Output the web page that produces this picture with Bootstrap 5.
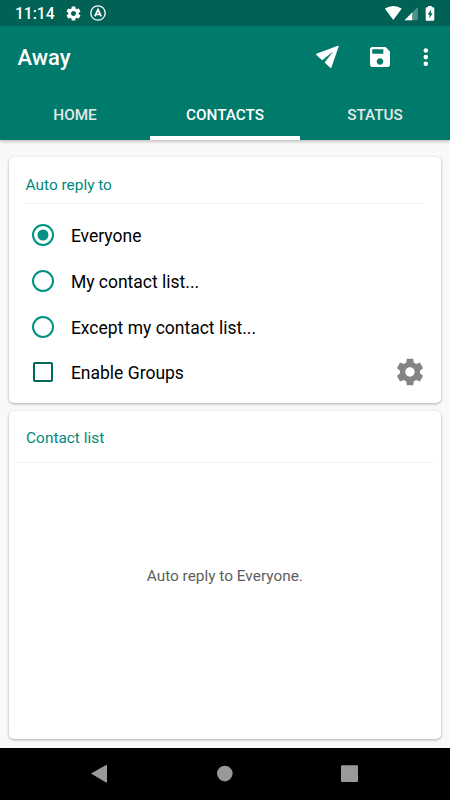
<!DOCTYPE html>
<html lang="en">
<head>
<meta charset="utf-8">
<meta name="viewport" content="width=device-width, initial-scale=1">
<title>Away</title>
<link rel="stylesheet" href="https://cdn.jsdelivr.net/npm/bootstrap@5.3.0/dist/css/bootstrap.min.css">
<style>
body{font-family:Roboto,"Liberation Sans",sans-serif;background:#f9f9f9;height:800px;overflow:hidden;color:#000}
svg{display:block;flex:none}
.statusbar{height:26px;background:#006154;padding-left:15px}
.clock{font-size:15.6px;font-weight:500;line-height:20px;padding-top:2px;width:50.3px}
.appbar{height:62px;background:#007a6a;padding-left:17.5px}
.apptitle{font-size:22px;font-weight:500;line-height:26px;padding-top:2px}
.tabs{height:52px;background:#007a6a}
header{box-shadow:0 1px 4px rgba(0,0,0,.3);flex:none}
.tabs .nav-link{color:#e4e9e8;font-size:15.3px;font-weight:500;line-height:20px;padding:17px 0 11px;border-radius:0;border-bottom:4px solid transparent;height:52px}
.tabs .nav-link.active{color:#fff;border-bottom-color:#fff}
.page{padding:17.4px 9px 9px 8.6px;gap:8.5px}
.panel{border:0;border-radius:5px;box-shadow:0 1px 3px rgba(0,0,0,.32)}
.panel-one{height:245.5px;padding:0 17px}
.panel-title{color:#00897b;font-size:15.4px;font-weight:400;line-height:20px;margin:0}
.panel-one .panel-title{padding:17.5px 0 8px}
.panel-two .panel-title{padding:16.5px 9px 14px}
.panel-two{padding:0 8.5px}
.rule{height:1px;background:#f0f0f0}
.opts{padding-top:8.7px}
.opt{height:45.6px;font-size:17.5px;line-height:24px;padding-left:5px}
.opt>svg:first-child{margin-right:16.3px}
.opt span{padding-top:2px}
.gear-btn{margin-right:-2.2px}
.hint{color:#606060;font-size:15.4px;padding-bottom:48.5px}
.navbar-os{height:52px;background:#000;flex:none}
</style>
<script src="https://cdn.jsdelivr.net/npm/bootstrap@5.3.0/dist/js/bootstrap.bundle.min.js"></script>
</head>
<body class="d-flex flex-column">
<svg width="0" height="0" class="position-absolute"><symbol id="gear" viewBox="0 0 24 24"><path d="M19.43 12.98c.04-.32.07-.64.07-.98s-.03-.66-.07-.98l2.11-1.65c.19-.15.24-.42.12-.64l-2-3.46c-.12-.22-.39-.3-.61-.22l-2.49 1c-.52-.4-1.08-.73-1.69-.98l-.38-2.65C14.46 2.18 14.25 2 14 2h-4c-.25 0-.46.18-.49.42l-.38 2.65c-.61.25-1.17.59-1.69.98l-2.49-1c-.23-.09-.49 0-.61.22l-2 3.46c-.13.22-.07.49.12.64l2.11 1.65c-.04.32-.07.65-.07.98s.03.66.07.98l-2.11 1.65c-.19.15-.24.42-.12.64l2 3.46c.12.22.39.3.61.22l2.49-1c.52.4 1.08.73 1.69.98l.38 2.65c.03.24.24.42.49.42h4c.25 0 .46-.18.49-.42l.38-2.65c.61-.25 1.17-.59 1.69-.98l2.49 1c.23.09.49 0 .61-.22l2-3.46c.12-.22.07-.49-.12-.64l-2.11-1.65zM12 15.5c-1.93 0-3.5-1.57-3.5-3.5s1.57-3.5 3.5-3.5 3.5 1.57 3.5 3.5-1.57 3.5-3.5 3.5z"/></symbol></svg>
<header>
  <div class="statusbar d-flex align-items-center text-white">
    <span class="clock">11:14</span>
    <svg width="17" height="17" fill="#fff"><use href="#gear"/></svg>
    <svg class="ms-2" width="16" height="16" viewBox="0 0 16 16" fill="none" stroke="#fff"><circle cx="8" cy="8" r="7.2" stroke-width="1.3"/><path d="M4.8 11.4 8 4.6l3.2 6.800M6 9.500h4" stroke-width="1.7"/></svg>
    <svg class="ms-auto" width="66" height="26" viewBox="384 0 66 26" fill="#fff"><path d="M384.8 8.600Q393.300 3.200 401.800 8.600L393.300 20z"/><path fill="#4d9187" d="M417.800 7v13.300h-13.300z"/><path d="M412.200 12.600v7.700h-7.700z"/><path d="M428 6h3.800v1.300h1.500q1 0 1 1v11.500q0 1-1 1h-6.600q-1 0-1-1V8.300q0-1 1-1h1.300z"/><path fill="#006154" d="m431.300 9.300-3.600 5.200h1.800v3.700l3.100-5h-1.900z"/></svg>
  </div>
  <div class="appbar d-flex align-items-center text-white">
    <span class="apptitle me-auto">Away</span>
    <svg width="140" height="32" viewBox="310 41 140 32" fill="#fff"><path d="M316.300 53.700 338 45.800Q339 45.600 338.700 46.600L331.400 67.600Q331 68.500 330.300 67.700L324.600 62.400 333.200 51.600 322.200 60.300 316.400 55.100Q315.700 54.200 316.300 53.700z"/><path transform="translate(366.700 43.700) scale(1.11)" d="M17 3H5c-1.110 0-2 .9-2 2v14c0 1.100.89 2 2 2h14c1.100 0 2-.9 2-2V7l-4-4zm-5 16c-1.660 0-3-1.340-3-3s1.340-3 3-3 3 1.340 3 3-1.340 3-3 3zm3-10H5V5h10v4z"/><circle cx="425.800" cy="50.500" r="2.300"/><circle cx="425.800" cy="57.100" r="2.300"/><circle cx="425.800" cy="63.700" r="2.300"/></svg>
  </div>
  <nav class="tabs nav nav-fill">
    <a class="nav-link col-4" href="#">HOME</a>
    <a class="nav-link col-4 active" href="#">CONTACTS</a>
    <a class="nav-link col-4" href="#">STATUS</a>
  </nav>
</header>
<main class="page d-flex flex-column flex-grow-1">
  <section class="card panel panel-one">
    <h2 class="panel-title">Auto reply to</h2>
    <div class="rule"></div>
    <div class="opts">
      <div class="opt d-flex align-items-center"><svg width="24" height="24" fill="none" stroke="#009384" stroke-width="2"><circle cx="12" cy="12" r="10"/><circle cx="12" cy="12" r="5.500" fill="#009384" stroke="none"/></svg><span>Everyone</span></div>
      <div class="opt d-flex align-items-center"><svg width="24" height="24" fill="none" stroke="#009384" stroke-width="2"><circle cx="12" cy="12" r="10"/></svg><span>My contact list...</span></div>
      <div class="opt d-flex align-items-center"><svg width="24" height="24" fill="none" stroke="#009384" stroke-width="2"><circle cx="12" cy="12" r="10"/></svg><span>Except my contact list...</span></div>
      <div class="opt d-flex align-items-center"><svg width="24" height="24" fill="none" stroke="#00695c" stroke-width="2"><rect x="3" y="3" width="18" height="18" rx="1"/></svg><span class="me-auto">Enable Groups</span><svg class="gear-btn" width="32" height="32" fill="#848484"><use href="#gear"/></svg></div>
    </div>
  </section>
  <section class="card panel panel-two flex-grow-1">
    <h2 class="panel-title">Contact list</h2>
    <div class="rule"></div>
    <div class="hint d-flex flex-grow-1 align-items-center justify-content-center">Auto reply to Everyone.</div>
  </section>
</main>
<footer class="navbar-os"><svg width="450" height="52" viewBox="0 748 450 52" fill="#999"><path d="M91 773.600 106 765q1-.4 1 .6v16.200q0 1-1 .6z"/><circle cx="224.800" cy="773.600" r="7.800"/><rect x="341" y="765.300" width="17" height="16.700" rx="1"/></svg></footer>
</body>
</html>
